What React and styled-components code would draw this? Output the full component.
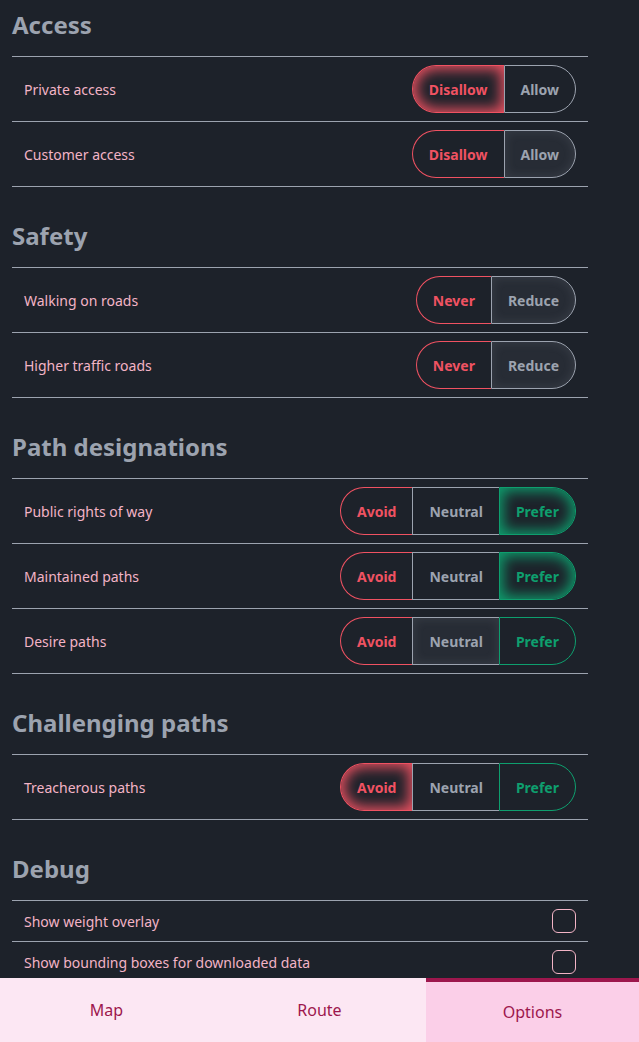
import React, { useState } from "react";
import styled, { createGlobalStyle, css } from "styled-components";

const Global = createGlobalStyle`
  html, body { margin: 0; padding: 0; background: #1d222a; }
  body { font-family: "Noto Sans", "Open Sans", sans-serif; }
  * { box-sizing: border-box; }
`;

const COLORS = {
  red: "#f05262",
  green: "#0e9f6e",
  gray: "#9ca3af",
};

const Page = styled.div`
  max-width: 600px;
  padding: 9px 12px 80px;
`;

const Section = styled.section`
  & + & { margin-top: 33px; }
`;

const Heading = styled.h2`
  margin: 0 0 15px;
  font-size: 24px;
  line-height: 32px;
  font-weight: 700;
  color: #9ca3af;
`;

const Row = styled.div`
  box-sizing: content-box;
  display: flex;
  align-items: center;
  justify-content: space-between;
  height: ${(p) => (p.$compact ? 40 : 64)}px;
  padding: 0 12px;
  border-top: 1px solid #9ca3af;
  &:last-child { border-bottom: 1px solid #9ca3af; }
`;

const Label = styled.span`
  font-size: 14px;
  color: #f3b4c6;
`;

const Segmented = styled.div`
  display: flex;
  height: 48px;
`;

const Segment = styled.button`
  font-family: inherit;
  font-size: 14px;
  font-weight: 700;
  height: 48px;
  padding: 0 16px;
  background: transparent;
  cursor: pointer;
  color: ${(p) => COLORS[p.$color]};
  border: 1px solid ${(p) => COLORS[p.$color]};
  border-right: none;
  &:first-child { border-radius: 24px 0 0 24px; }
  &:last-child {
    border-radius: 0 24px 24px 0;
    border-right: 1px solid ${(p) => COLORS[p.$color]};
  }
  ${(p) =>
    p.$active &&
    (p.$color === "gray"
      ? css`
          background: #272c35;
          box-shadow: inset 0 0 10px 2px rgba(156, 163, 175, 0.12);
        `
      : css`
          box-shadow: inset 0 0 14px 3px ${COLORS[p.$color]};
        `)}
`;

const Checkbox = styled.span`
  width: 24px;
  height: 24px;
  border: 1px solid #f3b4c6;
  border-radius: 6px;
  display: inline-block;
`;

const Nav = styled.nav`
  position: fixed;
  left: 0;
  right: 0;
  bottom: 0;
  height: 64px;
  display: grid;
  grid-template-columns: 1fr 1fr 1fr;
  background: #fce7f3;
`;

const Tab = styled.button`
  font-family: inherit;
  font-size: 16px;
  color: #9d174d;
  border: none;
  padding: 0;
  background: ${(p) => (p.$active ? "#fbcfe8" : "transparent")};
  ${(p) => p.$active && css`border-top: 4px solid #9d174d;`}
`;

const Control = ({ options, value }) => (
  <Segmented>
    {options.map((o) => (
      <Segment key={o.label} $color={o.color} $active={o.label === value}>
        {o.label}
      </Segment>
    ))}
  </Segmented>
);

const accessOpts = [
  { label: "Disallow", color: "red" },
  { label: "Allow", color: "gray" },
];
const safetyOpts = [
  { label: "Never", color: "red" },
  { label: "Reduce", color: "gray" },
];
const triOpts = [
  { label: "Avoid", color: "red" },
  { label: "Neutral", color: "gray" },
  { label: "Prefer", color: "green" },
];

export default function App() {
  const [tab] = useState("Options");
  return (
    <>
      <Global />
      <Page>
        <Section>
          <Heading>Access</Heading>
          <Row><Label>Private access</Label><Control options={accessOpts} value="Disallow" /></Row>
          <Row><Label>Customer access</Label><Control options={accessOpts} value="Allow" /></Row>
        </Section>
        <Section>
          <Heading>Safety</Heading>
          <Row><Label>Walking on roads</Label><Control options={safetyOpts} value="Reduce" /></Row>
          <Row><Label>Higher traffic roads</Label><Control options={safetyOpts} value="Reduce" /></Row>
        </Section>
        <Section>
          <Heading>Path designations</Heading>
          <Row><Label>Public rights of way</Label><Control options={triOpts} value="Prefer" /></Row>
          <Row><Label>Maintained paths</Label><Control options={triOpts} value="Prefer" /></Row>
          <Row><Label>Desire paths</Label><Control options={triOpts} value="Neutral" /></Row>
        </Section>
        <Section>
          <Heading>Challenging paths</Heading>
          <Row><Label>Treacherous paths</Label><Control options={triOpts} value="Avoid" /></Row>
        </Section>
        <Section>
          <Heading>Debug</Heading>
          <Row $compact><Label>Show weight overlay</Label><Checkbox /></Row>
          <Row $compact><Label>Show bounding boxes for downloaded data</Label><Checkbox /></Row>
        </Section>
      </Page>
      <Nav>
        {["Map", "Route", "Options"].map((t) => (
          <Tab key={t} $active={t === tab}>{t}</Tab>
        ))}
      </Nav>
    </>
  );
}
